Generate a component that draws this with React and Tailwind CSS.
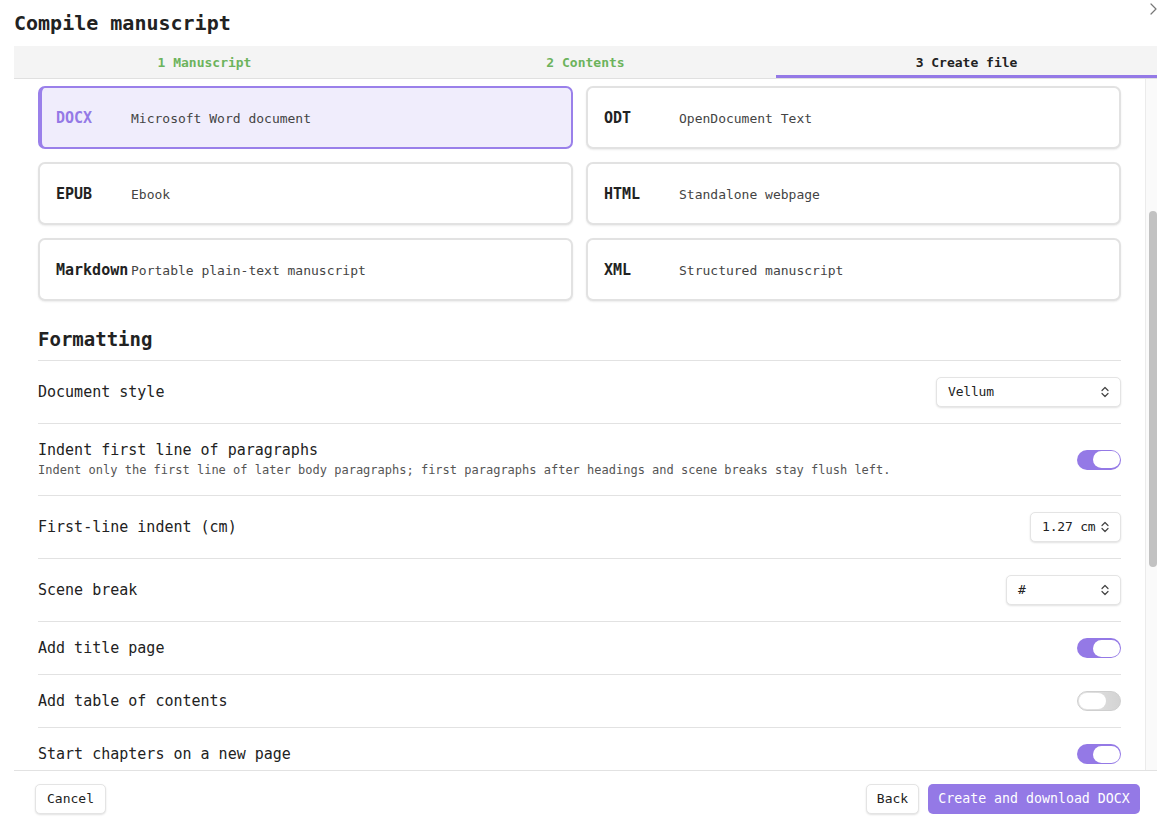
import React from "react";

const FONT = { fontFamily: '"DejaVu Sans Mono", "Liberation Mono", monospace' };

const formats = [
  { id: "DOCX", desc: "Microsoft Word document", selected: true },
  { id: "ODT", desc: "OpenDocument Text" },
  { id: "EPUB", desc: "Ebook" },
  { id: "HTML", desc: "Standalone webpage" },
  { id: "Markdown", desc: "Portable plain-text manuscript" },
  { id: "XML", desc: "Structured manuscript" },
];

function UpDown() {
  return (
    <svg className="w-[10px] h-[12px] shrink-0" viewBox="0 0 10 12" fill="none" stroke="#444" strokeWidth="1.2" strokeLinecap="round" strokeLinejoin="round">
      <path d="M2 4.5L5 1.5L8 4.5" />
      <path d="M2 7.5L5 10.5L8 7.5" />
    </svg>
  );
}

function Select({ value, width }) {
  return (
    <div className={`${width} h-[30px] flex items-center justify-between pl-[11px] pr-[10px] bg-white border border-[#e4e4e4] rounded-[5px] shadow-[0_1px_2px_rgba(0,0,0,0.12)] text-[13px] text-[#222]`}>
      <span className="tracking-[-0.2px]">{value}</span>
      <UpDown />
    </div>
  );
}

function Toggle({ on }) {
  return on ? (
    <div className="w-[44px] h-[20px] rounded-full bg-[#9479e6] flex items-center justify-end pr-[1px]">
      <div className="w-[27px] h-[17px] rounded-full bg-white" />
    </div>
  ) : (
    <div className="w-[44px] h-[20px] rounded-full bg-gradient-to-r from-[#e6e6e6] to-[#d3d3d3] border border-[#cfcfcf] flex items-center pl-[1px]">
      <div className="w-[27px] h-[16px] rounded-full bg-white" />
    </div>
  );
}

function Row({ label, desc, children }) {
  return (
    <div className="flex items-center justify-between border-b border-[#e2e2e2] py-4">
      <div>
        <div className="text-[15px] leading-5 text-[#222]">{label}</div>
        {desc && <div className="text-[12px] leading-[19px] text-[#555] pt-[1px] -mb-[1px]">{desc}</div>}
      </div>
      {children}
    </div>
  );
}

export default function App() {
  return (
    <div className="w-full h-screen bg-white flex flex-col overflow-hidden" style={FONT}>
      <div className="h-[46px] flex justify-between pl-[14px] shrink-0">
        <h1 className="text-[20px] font-bold text-[#222] leading-[46px]">Compile manuscript</h1>
        <svg className="w-[7px] h-[12px] mt-[3px]" viewBox="0 0 7 12" fill="none" stroke="#777" strokeWidth="1.2" strokeLinecap="round" strokeLinejoin="round">
          <path d="M1 1L6 6L1 11" />
        </svg>
      </div>

      <div className="ml-[14px] grid grid-cols-3 bg-[#f4f4f4] border-b border-[#e0e0e0] h-[33px] shrink-0 text-[13px] font-semibold">
        <div className="flex items-center justify-center text-[#6cb35c] pt-[1px]">1 Manuscript</div>
        <div className="flex items-center justify-center text-[#6cb35c] pt-[1px]">2 Contents</div>
        <div className="flex items-center justify-center text-[#222] border-b-[3px] border-[#9479e6] pt-[4px]">3 Create file</div>
      </div>

      <div className="ml-[14px] flex-1 flex min-h-0">
        <div className="flex-1 overflow-hidden px-6 pt-[7px]">
          <div className="grid grid-cols-2 gap-[13px]">
            {formats.map((f) => (
              <div
                key={f.id}
                className={
                  f.selected
                    ? "h-[63px] flex items-center rounded-[7px] border-2 border-l-4 border-[#9a80ea] bg-[#f0edfc] pl-[14px] pt-[2px]"
                    : "h-[63px] flex items-center rounded-[7px] border-2 border-[#e2e2e2] bg-white pl-4 pt-[2px] shadow-[0_1px_2px_rgba(0,0,0,0.08)]"
                }
              >
                <span className={`w-[75px] shrink-0 text-[15px] font-bold whitespace-nowrap ${f.selected ? "text-[#9479e6]" : "text-[#222]"}`}>
                  {f.id}
                </span>
                <span className="text-[13px] text-[#444] whitespace-nowrap">{f.desc}</span>
              </div>
            ))}
          </div>

          <h2 className="pt-[25px] pb-[7px] text-[19px] leading-[27px] font-bold text-[#222] border-b border-[#e2e2e2]">Formatting</h2>

          <Row label="Document style">
            <Select value="Vellum" width="w-[185px]" />
          </Row>
          <Row
            label="Indent first line of paragraphs"
            desc="Indent only the first line of later body paragraphs; first paragraphs after headings and scene breaks stay flush left."
          >
            <Toggle on />
          </Row>
          <Row label="First-line indent (cm)">
            <Select value="1.27 cm" width="w-[91px]" />
          </Row>
          <Row label="Scene break">
            <Select value="#" width="w-[115px]" />
          </Row>
          <Row label="Add title page">
            <Toggle on />
          </Row>
          <Row label="Add table of contents">
            <Toggle />
          </Row>
          <Row label="Start chapters on a new page">
            <Toggle on />
          </Row>
        </div>

        <div className="w-[12px] shrink-0 bg-[#fafafa] border-l border-[#ebebeb] pl-[3px] pt-[132px]">
          <div className="w-[8px] h-[356px] rounded-full bg-[#c2c2c2]" />
        </div>
      </div>

      <div className="ml-[14px] h-[60px] shrink-0 border-t border-[#e2e2e2] flex items-start justify-between pl-[21px] pr-[17px] pt-[13px]">
        <button className="h-[30px] px-[11px] bg-white border border-[#e4e4e4] rounded-[5px] shadow-[0_1px_2px_rgba(0,0,0,0.12)] text-[13px] text-[#222]">
          Cancel
        </button>
        <div className="flex gap-[9px]">
          <button className="h-[30px] w-[53px] bg-white border border-[#e4e4e4] rounded-[5px] shadow-[0_1px_2px_rgba(0,0,0,0.12)] text-[13px] text-[#222]">
            Back
          </button>
          <button className="h-[30px] w-[212px] bg-[#9479e6] rounded-[5px] text-[13.25px] text-white">
            Create and download DOCX
          </button>
        </div>
      </div>
    </div>
  );
}
